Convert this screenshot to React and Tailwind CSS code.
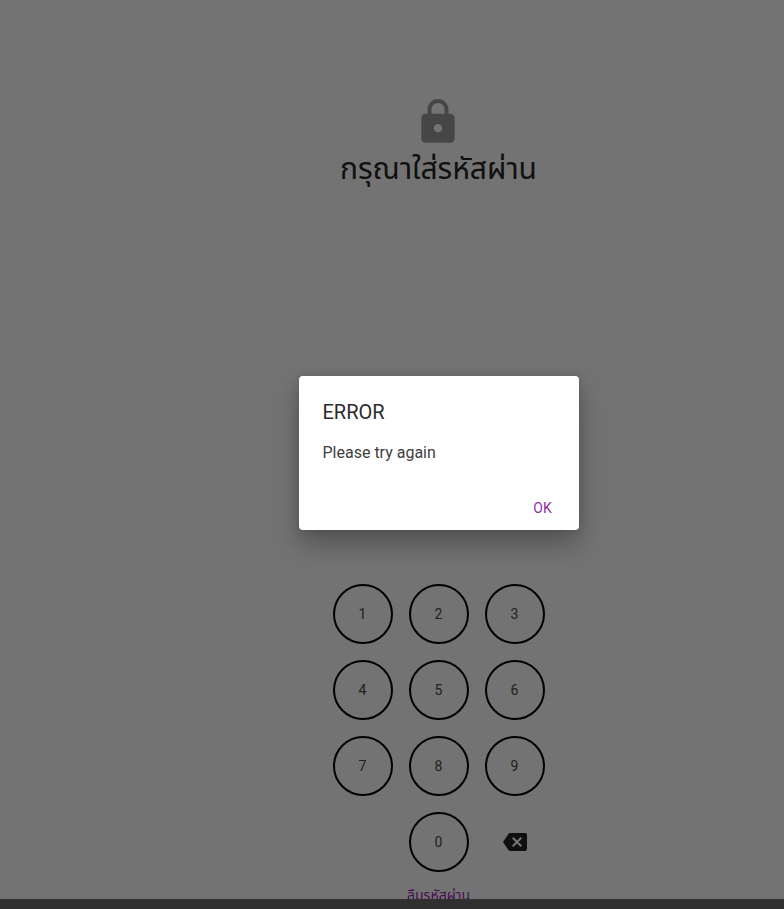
const digits = ['1', '2', '3', '4', '5', '6', '7', '8', '9'];

function Key({ children }) {
  return (
    <button
      type="button"
      className="flex size-15 items-center justify-center rounded-full border-2 border-black text-sm text-[#484848]"
    >
      {children}
    </button>
  );
}

function LockIcon() {
  return (
    <svg viewBox="0 0 24 24" className="size-[50px] shrink-0 fill-[#9a9a9a]" aria-hidden="true">
      <path d="M18 8h-1V6c0-2.76-2.24-5-5-5S7 3.24 7 6v2H6c-1.1 0-2 .9-2 2v10c0 1.100.9 2 2 2h12c1.100 0 2-.9 2-2V10c0-1.100-.9-2-2-2zm-6 9c-1.100 0-2-.9-2-2s.9-2 2-2 2 .9 2 2-.9 2-2 2zM8.900 8V6c0-1.710 1.390-3.100 3.100-3.100s3.100 1.390 3.100 3.100v2H8.900z" />
    </svg>
  );
}

function BackspaceIcon() {
  return (
    <svg viewBox="0 0 24 24" className="size-6 fill-[#212121]" aria-hidden="true">
      <path d="M22 3H7c-.69 0-1.230.35-1.590.88L0 12l5.410 8.110c.36.53.9.89 1.590.89h15c1.100 0 2-.9 2-2V5c0-1.100-.9-2-2-2zm-3 12.590L17.590 17 14 13.410 10.410 17 9 15.590 12.590 12 9 8.410 10.410 7 14 10.590 17.590 7 19 8.410 15.410 12 19 15.590z" />
    </svg>
  );
}

export default function App() {
  return (
    <div className="flex h-screen flex-col overflow-hidden bg-[#303030] font-[Roboto,'Noto_Sans_Thai','Noto_Sans',sans-serif]">
      <main className="relative flex min-h-0 flex-1 flex-col items-center overflow-hidden bg-[#fafafa] pl-[93px]">
        <div className="flex flex-col items-center pt-[97px]">
          <LockIcon />
          <h1 className="text-3xl leading-[44px] text-[#272727]">กรุณาใส่รหัสผ่าน</h1>
        </div>
        <div className="mt-auto flex shrink-0 flex-col items-center">
          <div className="grid grid-cols-3 gap-4">
            {digits.map((digit) => (
              <Key key={digit}>{digit}</Key>
            ))}
            <span />
            <Key>0</Key>
            <button type="button" aria-label="Backspace" className="flex size-15 items-center justify-center">
              <BackspaceIcon />
            </button>
          </div>
          <div className="h-[27px] pt-3">
            <button type="button" className="block text-sm leading-[22px] text-[#9c27b0]">
              ลืมรหัสผ่าน
            </button>
          </div>
        </div>
        <div className="absolute inset-0 flex items-center justify-center bg-black/54 pt-[7px] pl-[93px]">
          <div
            role="dialog"
            aria-modal="true"
            aria-labelledby="dialog-title"
            className="w-70 rounded bg-white shadow-[0_14px_26px_0_rgba(0,0,0,0.28),0_0_8px_0_rgba(0,0,0,0.12)]"
          >
            <h2 id="dialog-title" className="px-6 pt-6 text-xl leading-6 text-[#2b2b2b]">ERROR</h2>
            <p className="px-6 pt-4 pb-6 text-base leading-[26px] text-[#404040]">Please try again</p>
            <div className="flex justify-end pr-1 pb-1">
              <button type="button" className="h-9 w-16 text-sm text-[#9030a0]">OK</button>
            </div>
          </div>
        </div>
      </main>
      <footer className="h-[10px] shrink-0 bg-[#303030]" />
    </div>
  );
}
